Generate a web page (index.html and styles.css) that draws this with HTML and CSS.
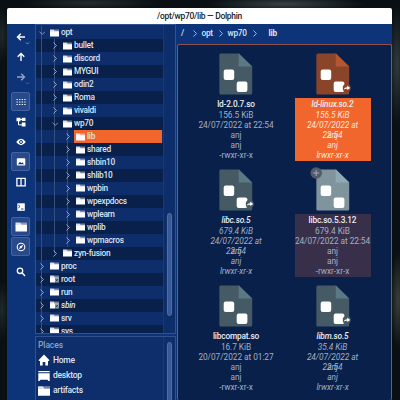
FILE: index.html
```html
<!DOCTYPE html>
<html lang="en">
<head>
<meta charset="utf-8">
<title>/opt/wp70/lib — Dolphin</title>
<link rel="stylesheet" href="styles.css">
</head>
<body>
<svg class="defs" aria-hidden="true">
  <symbol id="folder" viewBox="0 0 18 16"><path d="M7 1h11v5H7z" opacity=".45"/><path d="M0 1h7l2.500 3.500L7.500 6H0z" opacity=".85"/><path d="M0 5h8l2-.5h8V15H0z"/></symbol>
  <symbol id="locked" viewBox="0 0 18 16"><path d="M7 1h11v5H7z" opacity=".45"/><path d="M0 1h7l2.500 3.500L7.500 6H0z" opacity=".85"/><path d="M0 5h10v10H0z"/><path d="M10 5h8v10h-8z" opacity=".6"/><path d="M11 8l5 5M16 8l-5 5" fill="none" stroke="#12305f" stroke-width="1.500"/></symbol>
  <symbol id="right" viewBox="0 0 4 7"><path d="M.5.5l3 3-3 3" fill="none" stroke="currentColor" stroke-width=".9"/></symbol>
  <symbol id="down" viewBox="0 0 7 4"><path d="M.5.5l3 3 3-3" fill="none" stroke="currentColor" stroke-width=".9"/></symbol>
  <symbol id="doc" viewBox="0 0 36 42"><path d="M1.500.5h18.500L33 13.500V40q0 1.500-1.500 1.500h-30Q0 41.500 0 40V2Q0 .5 1.500.5z" fill="var(--page)"/><path d="M19.500.5L33 13.500H19.500z" fill="var(--fold)"/><rect x="4.500" y="16.500" width="10.500" height="10.500" rx="2" fill="#fff"/><rect x="17.500" y="28.500" width="10.700" height="10.500" rx="2" fill="#fff"/></symbol>
  <symbol id="link" viewBox="0 0 9 8"><circle cx="4.500" cy="4" r="4" fill="var(--page)"/><path d="M1.500 5.500Q2 3.300 5 3.200V1.500L8 4 5 6V4.800Q3 4.500 1.500 5.500z" fill="#fff"/></symbol>
</svg>
<main class="window">
  <header class="titlebar"><span>/opt/wp70/lib — Dolphin</span></header>
  <div class="body">
    <nav class="toolbar">
      <span class="tool"><svg viewBox="0 0 20 20"><path class="line" d="M14 10H6.800M9.800 6.700L6.500 10l3.300 3.300"/><path class="tiny" d="M15 15.500l1.500 1.500 1.500-1.500"/></svg></span>
      <span class="tool"><svg viewBox="0 0 20 20"><path class="line" d="M10 14V6.800M6.700 9.800L10 6.500l3.300 3.300"/></svg></span>
      <span class="tool dim"><svg viewBox="0 0 20 20"><path class="line" d="M6 10h7.200M10.200 6.700L13.500 10l-3.300 3.300"/><path class="tiny" d="M15 15.500l1.500 1.500 1.500-1.500"/></svg></span>
      <span class="tool on gap"><svg viewBox="0 0 20 20"><path d="M5.500 7.500h9.500M5.500 10h9.500M5.500 12.500h9.500" fill="none" stroke="#fff" stroke-width="1.200" stroke-dasharray="1.300 1.300"/></svg></span>
      <span class="tool"><svg viewBox="0 0 20 20"><path d="M5.500 5.800h4v3.500h-4zM10.800 5.800h3.700v3.200h-3.700zM10.800 10.500h3.700v4h-3.700z" fill="#fff"/><path d="M7.500 8v4.800H12M9 7.500h2" fill="none" stroke="#fff"/></svg></span>
      <span class="tool"><svg viewBox="0 0 20 20"><path d="M5.200 10q4.800-6.600 9.600 0-4.800 6.600-9.600 0z" fill="#fff"/><circle cx="10" cy="10" r="1.500" fill="none" stroke="#0d3379"/></svg></span>
      <span class="tool on"><svg viewBox="0 0 20 20"><rect x="5.800" y="6.300" width="8.500" height="7.300" rx=".8" fill="#fff"/><path d="M7 12.300l2-2.500 1.300 1.500 1-1 1.700 2z" fill="#0d3379"/></svg></span>
      <span class="tool"><svg viewBox="0 0 20 20"><path d="M5.900 6.300h8.300v7.500H5.900zM10.050 6.300v7.500" fill="none" stroke="#fff" stroke-width="1.300"/></svg></span>
      <span class="tool gap"><svg viewBox="0 0 20 20"><rect x="6.300" y="6.300" width="7.500" height="7.500" fill="#fff"/><path d="M7.300 8l1.700 1.500L7.300 11M10 12h2.500" fill="none" stroke="#0d3379" stroke-width=".9"/></svg></span>
      <span class="tool on"><svg viewBox="0 0 20 20"><use href="#folder" x="4.300" y="4.800" width="11.700" height="10.500"/></svg></span>
      <span class="tool on"><svg viewBox="0 0 20 20"><circle cx="10" cy="10" r="3.800" fill="none" stroke="#fff" stroke-width="1.100"/><path d="M12.200 7.800l-1.400 3-3 1.400 1.400-3z" fill="#fff"/></svg></span>
      <span class="tool gap"><svg viewBox="0 0 20 20"><circle cx="9" cy="8.800" r="2.700" fill="none" stroke="#fff" stroke-width="1.300"/><path d="M11 10.800l3 3.200" stroke="#fff" stroke-width="1.400"/></svg></span>
    </nav>
    <aside class="side">
      <section class="panel folders">
        <div class="tree">
          <div class="row d0"><svg class="chev open"><use href="#down"/></svg><svg class="fold"><use href="#folder"/></svg><span>opt</span></div>
          <div class="row d1"><svg class="chev"><use href="#right"/></svg><svg class="fold"><use href="#folder"/></svg><span>bullet</span></div>
          <div class="row d1"><svg class="chev"><use href="#right"/></svg><svg class="fold"><use href="#folder"/></svg><span>discord</span></div>
          <div class="row d1"><svg class="chev"><use href="#right"/></svg><svg class="fold"><use href="#folder"/></svg><span>MYGUI</span></div>
          <div class="row d1"><svg class="chev"><use href="#right"/></svg><svg class="fold"><use href="#folder"/></svg><span>odin2</span></div>
          <div class="row d1"><svg class="chev"><use href="#right"/></svg><svg class="fold"><use href="#folder"/></svg><span>Roma</span></div>
          <div class="row d1"><svg class="chev"><use href="#right"/></svg><svg class="fold"><use href="#folder"/></svg><span>vivaldi</span></div>
          <div class="row d1"><svg class="chev open"><use href="#down"/></svg><svg class="fold"><use href="#folder"/></svg><span>wp70</span></div>
          <div class="row d2 current"><svg class="chev"><use href="#right"/></svg><div class="pick"><svg class="fold"><use href="#folder"/></svg><span>lib</span></div></div>
          <div class="row d2"><svg class="chev"><use href="#right"/></svg><svg class="fold"><use href="#folder"/></svg><span>shared</span></div>
          <div class="row d2"><svg class="chev"><use href="#right"/></svg><svg class="fold"><use href="#folder"/></svg><span>shbin10</span></div>
          <div class="row d2"><svg class="chev"><use href="#right"/></svg><svg class="fold"><use href="#folder"/></svg><span>shlib10</span></div>
          <div class="row d2"><svg class="chev"><use href="#right"/></svg><svg class="fold"><use href="#folder"/></svg><span>wpbin</span></div>
          <div class="row d2"><svg class="chev"><use href="#right"/></svg><svg class="fold"><use href="#folder"/></svg><span>wpexpdocs</span></div>
          <div class="row d2"><svg class="chev"><use href="#right"/></svg><svg class="fold"><use href="#folder"/></svg><span>wplearn</span></div>
          <div class="row d2"><svg class="chev"><use href="#right"/></svg><svg class="fold"><use href="#folder"/></svg><span>wplib</span></div>
          <div class="row d2"><svg class="chev"><use href="#right"/></svg><svg class="fold"><use href="#folder"/></svg><span>wpmacros</span></div>
          <div class="row d1 last"><svg class="chev"><use href="#right"/></svg><svg class="fold"><use href="#folder"/></svg><span>zyn-fusion</span></div>
          <div class="row d0"><svg class="chev"><use href="#right"/></svg><svg class="fold"><use href="#folder"/></svg><span>proc</span></div>
          <div class="row d0"><svg class="chev"><use href="#right"/></svg><svg class="fold"><use href="#locked"/></svg><span>root</span></div>
          <div class="row d0"><svg class="chev"><use href="#right"/></svg><svg class="fold"><use href="#folder"/></svg><span>run</span></div>
          <div class="row d0"><svg class="chev"><use href="#right"/></svg><svg class="fold"><use href="#locked"/></svg><span class="slant">sbin</span></div>
          <div class="row d0"><svg class="chev"><use href="#right"/></svg><svg class="fold"><use href="#folder"/></svg><span>srv</span></div>
          <div class="row d0"><svg class="chev"><use href="#right"/></svg><svg class="fold"><use href="#folder"/></svg><span>sys</span></div>
        </div>
        <div class="track"><div class="thumb"></div></div>
      </section>
      <section class="panel places">
        <div class="list">
          <h2>Places</h2>
          <div class="place"><svg viewBox="0 0 12 12"><path d="M6 .5l5.500 5.700-.8.800H10v4.500H7.300V8H4.700v3.500H2V7h-.7L.5 6.200z"/></svg><span>Home</span></div>
          <div class="place"><svg viewBox="0 0 12 12"><path d="M.3 1h11.400v1.300H.3zM.3 3.200h11.400V11H10.500l-1-1.200h-7L1.500 11H.3z"/></svg><span>desktop</span></div>
          <div class="place"><svg><use href="#folder"/></svg><span>artifacts</span></div>
        </div>
        <div class="track"><div class="thumb"></div></div>
      </section>
    </aside>
    <section class="main">
      <nav class="crumbs"><span class="c1">/</span><svg><use href="#right"/></svg><span class="c2">opt</span><svg><use href="#right"/></svg><span class="c3">wp70</span><svg><use href="#right"/></svg><b>lib</b></nav>
      <div class="files">
        <article class="file"><div class="icon"><svg><use href="#doc"/></svg></div><div class="label"><b>ld-2.0.7.so</b><span>156.5 KiB</span><span>24/07/2022 at 22:54</span><span>anj</span><span>anj</span><span>-rwxr-xr-x</span></div></article>
        <article class="file link selected"><div class="icon"><svg><use href="#doc"/></svg><svg class="arrow"><use href="#link"/></svg></div><div class="label"><b>ld-linux.so.2</b><span>156.5 KiB</span><span>24/07/2022 at<br>22:54</span><span>anj</span><span>anj</span><span>lrwxr-xr-x</span></div></article>
        <article class="file link"><div class="icon"><svg><use href="#doc"/></svg><svg class="arrow"><use href="#link"/></svg></div><div class="label"><b>libc.so.5</b><span>679.4 KiB</span><span>24/07/2022 at<br>22:54</span><span>anj</span><span>anj</span><span>lrwxr-xr-x</span></div></article>
        <article class="file hover"><div class="icon"><svg><use href="#doc"/></svg><svg class="plus" viewBox="0 0 12 12"><circle cx="6" cy="6" r="5.800" fill="#525b6a"/><path d="M6 3v6M3 6h6" stroke="#a5adb8"/></svg></div><div class="label"><b>libc.so.5.3.12</b><span>679.4 KiB</span><span>24/07/2022 at 22:54</span><span>anj</span><span>anj</span><span>-rwxr-xr-x</span></div></article>
        <article class="file"><div class="icon"><svg><use href="#doc"/></svg></div><div class="label"><b>libcompat.so</b><span>16.7 KiB</span><span>20/07/2022 at 01:27</span><span>anj</span><span>anj</span><span>-rwxr-xr-x</span></div></article>
        <article class="file link"><div class="icon"><svg><use href="#doc"/></svg><svg class="arrow"><use href="#link"/></svg></div><div class="label"><b>libm.so.5</b><span>35.4 KiB</span><span>24/07/2022 at<br>22:54</span><span>anj</span><span>anj</span><span>lrwxr-xr-x</span></div></article>
      </div>
    </section>
  </div>
</main>
</body>
</html>
```
FILE: styles.css
```css
* { box-sizing: border-box; }
body {
  margin: 0; width: 400px; height: 400px; overflow: hidden;
  padding: 8px 8px 0 7px;
  font: 500 8.3px/13px Roboto, "Liberation Sans", sans-serif;
  letter-spacing: -.25px;
  color: #dce4f2;
  background:
    radial-gradient(ellipse 70px 7px at 90px 3px, #252c2e, transparent),
    radial-gradient(ellipse 80px 8px at 285px 4px, #384144, transparent),
    radial-gradient(ellipse 9px 60px at 397px 65px, #303a3e, transparent),
    radial-gradient(ellipse 8px 50px at 398px 300px, #3a3e3b, transparent),
    radial-gradient(ellipse 8px 28px at 2px 35px, #20282a, transparent),
    radial-gradient(ellipse 7px 30px at 2px 310px, #202a2a, transparent),
    #090f12;
}
svg { display: block; flex: none; fill: #fff; }
.defs { position: absolute; width: 0; height: 0; }
.window { width: 385px; height: 392px; display: flex; flex-direction: column; border-radius: 2px 2px 0 0; overflow: hidden; }
.titlebar { height: 16px; background: #fff; color: #1c1c1e; text-align: center; line-height: 16px; font-size: 8.500px; letter-spacing: -.3px; }
.body { flex: 1; min-height: 0; display: flex; background: #0d3379; }

.toolbar { width: 28px; padding: 3px 0 0 4px; }
.tool { display: block; width: 19px; height: 19px; margin-bottom: 1px; border: 1px solid transparent; border-radius: 2px; }
.tool svg { width: 20px; height: 20px; margin: -1.500px; overflow: visible; }
.tool.gap { margin-top: 6px; }
.tool.on { background: #28498a; border-color: #45629f; }
.tool.dim { opacity: .55; }
.line { fill: none; stroke: #fff; stroke-width: 1.400; }
.tiny { fill: none; stroke: #9fb1d3; stroke-width: .8; }

.side { width: 141px; display: flex; flex-direction: column; gap: 2px; overflow: hidden; }
.panel { border: 1px solid #31528f; background: #0d2d6b; display: flex; overflow: hidden; }
.folders { height: 310px; flex: none; }
.places { height: 90px; flex: none; }
.tree { width: 127px; padding-top: 1.300px; }
.row { height: 12.970px; display: flex; align-items: center; --g: #35507e; }
.row:nth-child(even) { background-color: #08204a; }
.row > span, .pick > span { margin-left: 2.500px; }
.d0 { padding-left: 4px; background-image: linear-gradient(var(--g), var(--g)); background-size: 1px 100%; background-position: 5px 0; background-repeat: no-repeat; }
.d1, .d2 { background-image: linear-gradient(var(--g), var(--g)), linear-gradient(var(--g), var(--g)); background-size: 1px 100%; background-position: 5px 0, 18px 0; background-repeat: no-repeat; }
.d1 { padding-left: 17px; }
.d2 { padding-left: 30px; background-image: linear-gradient(var(--g), var(--g)), linear-gradient(var(--g), var(--g)), linear-gradient(var(--g), var(--g)); background-position: 5px 0, 18px 0, 31px 0; }
.last { background-size: 1px 100%, 1px 50%; }
.chev { width: 4px; height: 7px; margin-right: 5.500px; color: #9fb0cc; }
.chev.open { width: 6.500px; height: 4px; margin: 0 4.500px 0 -1.500px; }
.fold { width: 9px; height: 8px; }
.pick { flex: 1; align-self: stretch; display: flex; align-items: center; background: #f1662c; margin: 0 1px 0 -1.500px; padding-left: 1.500px; }
.slant { font-style: italic; }
.track { flex: 1; border-left: 1px solid #183974; padding-left: 2.500px; }
.thumb { width: 5.500px; background: #395896; border: 1px solid #526da4; border-radius: 3px; }
.folders .thumb { height: 103px; margin-top: 188px; }
.places .thumb { height: 90px; margin-top: 5px; }
.list { width: 127px; padding-left: 2px; }
h2 { font-size: 8.500px; font-weight: 500; color: #8fa0c1; margin: 1.500px 0 0; line-height: 13px; letter-spacing: -.1px; }
.place { height: 15.400px; position: relative; top: 1px; display: flex; align-items: center; font-size: 8.500px; }
.place svg { width: 12px; height: 12px; margin-right: 3px; }

.main { flex: 1; padding-left: 1px; display: flex; flex-direction: column; }
.crumbs { height: 20px; display: flex; align-items: center; padding: 0 0 1px 4px; }
.crumbs svg { width: 4px; height: 7px; color: #b5c3dc; }
.c1 { width: 11.500px; }
.c2 { margin-left: 5px; width: 17px; }
.c3 { margin-left: 5px; width: 25.500px; }
.crumbs b { margin-left: 11.500px; font-weight: 700; }
.files { flex: 1; border: 1px solid #92504f; border-bottom: 0; border-radius: 2px; background: #08204a; display: grid; grid-template-columns: 76px 76px; grid-auto-rows: 116px; column-gap: 20.500px; padding: 8px 0 0 20px; min-height: 0; }
.file { --page: #455a64; --fold: #5b7885; text-align: center; line-height: 10px; }
.icon { position: relative; width: 36px; height: 42px; margin: 0 auto; transform: translateX(1.200px); }
.icon > svg { width: 36px; height: 42px; }
.icon .arrow { position: absolute; width: 9px; height: 8px; left: 26px; top: 31px; }
.icon .plus { position: absolute; width: 12px; height: 12px; left: -6px; top: -2px; }
.label { height: 63px; margin-top: 3px; padding-top: 1px; color: #a4afc1; font-weight: 400; letter-spacing: -.05px; white-space: nowrap; }
.label > * { display: block; height: 10.100px; }
.label b { font-weight: 500; color: #e8edf5; height: 10.500px; letter-spacing: -.18px; }
.link .label { font-style: italic; }
.selected { --page: #8a442a; --fold: #b25633; }
.selected .label { background: #f1662c; color: #fbe5dc; }
.hover { --page: #80949e; --fold: #91a9b5; }
.hover .label { background: #382f4a; }
```
